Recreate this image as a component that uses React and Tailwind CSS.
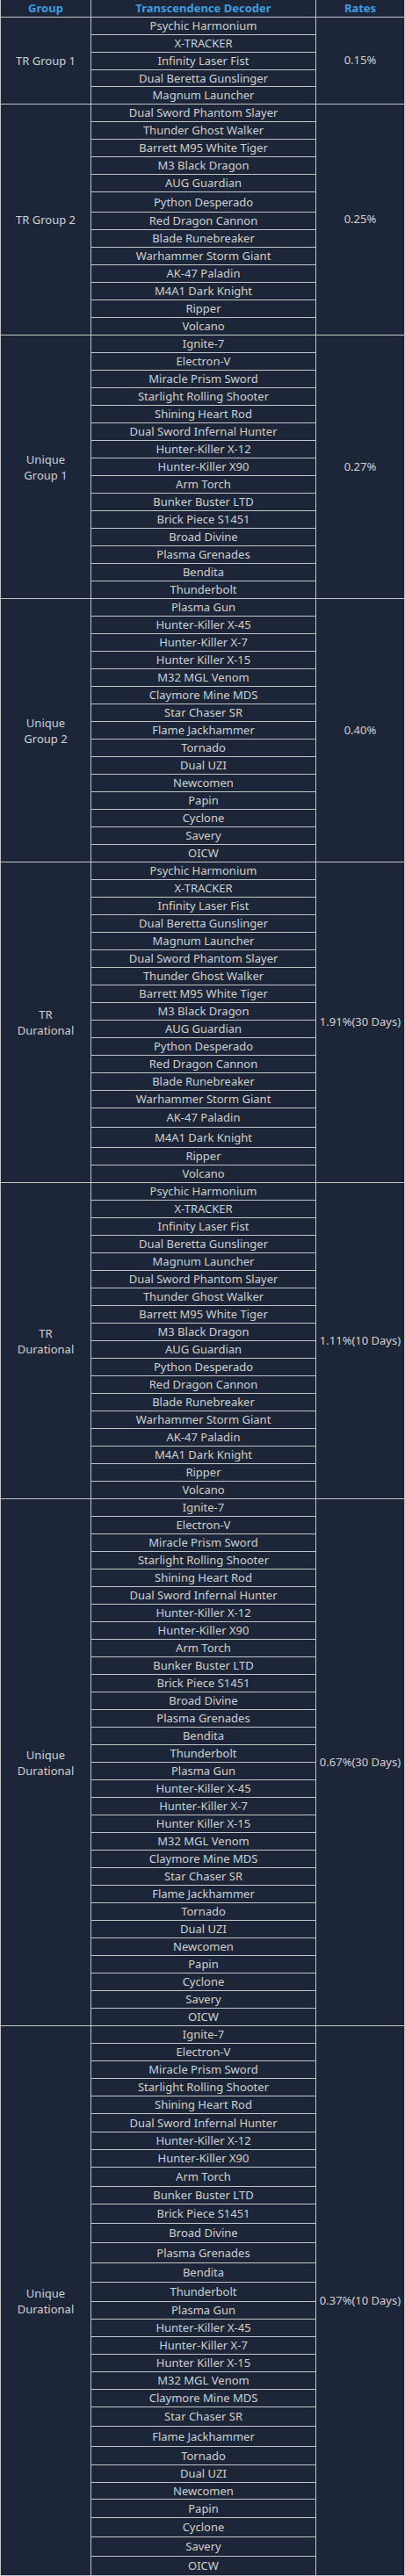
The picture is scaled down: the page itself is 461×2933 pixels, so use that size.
import React from "react";

const H = {
  19: "h-[19px]",
  20: "h-[20px]",
  21: "h-[21px]",
  22: "h-[22px]",
  23: "h-[23px]",
};

const TR1 = ["Psychic Harmonium", "X-TRACKER", "Infinity Laser Fist", "Dual Beretta Gunslinger", "Magnum Launcher"];
const TR2 = [
  "Dual Sword Phantom Slayer", "Thunder Ghost Walker", "Barrett M95 White Tiger", "M3 Black Dragon",
  "AUG Guardian", "Python Desperado", "Red Dragon Cannon", "Blade Runebreaker", "Warhammer Storm Giant",
  "AK-47 Paladin", "M4A1 Dark Knight", "Ripper", "Volcano",
];
const U1 = [
  "Ignite-7", "Electron-V", "Miracle Prism Sword", "Starlight Rolling Shooter", "Shining Heart Rod",
  "Dual Sword Infernal Hunter", "Hunter-Killer X-12", "Hunter-Killer X90", "Arm Torch", "Bunker Buster LTD",
  "Brick Piece S1451", "Broad Divine", "Plasma Grenades", "Bendita", "Thunderbolt",
];
const U2 = [
  "Plasma Gun", "Hunter-Killer X-45", "Hunter-Killer X-7", "Hunter Killer X-15", "M32 MGL Venom",
  "Claymore Mine MDS", "Star Chaser SR", "Flame Jackhammer", "Tornado", "Dual UZI", "Newcomen", "Papin",
  "Cyclone", "Savery", "OICW",
];

const fill = (n, v = 20) => Array.from({ length: n }, () => v);

const groups = [
  { label: ["TR Group 1"], rate: "0.15%", items: TR1, heights: [20, 20, 20, 19, 20] },
  { label: ["TR Group 2"], rate: "0.25%", items: TR2, heights: [20, 20, 20, 20, 20, 23, 20, 20, 20, 20, 20, 20, 20] },
  { label: ["Unique", "Group 1"], rate: "0.27%", items: U1, heights: fill(15) },
  { label: ["Unique", "Group 2"], rate: "0.40%", items: U2, heights: fill(15) },
  {
    label: ["TR", "Durational"], rate: "1.91%(30 Days)", items: [...TR1, ...TR2],
    heights: [...fill(14), 22, 23, 20, 20],
  },
  { label: ["TR", "Durational"], rate: "1.11%(10 Days)", items: [...TR1, ...TR2], heights: fill(18) },
  { label: ["Unique", "Durational"], rate: "0.67%(30 Days)", items: [...U1, ...U2], heights: fill(30) },
  {
    label: ["Unique", "Durational"], rate: "0.37%(10 Days)", items: [...U1, ...U2],
    heights: [
      20, 20, 20, 20, 20, 21, 20, 20, 22, 20, 22, 22, 23, 22, 22,
      20, 20, 20, 20, 20, 20, 22, 23, 21, 20, 19, 21, 22, 22, 22,
    ],
  },
];

export default function App() {
  return (
    <div
      className="w-[461px] bg-[#1c2638] text-[13px] text-[#cfd0d0] border-l border-b border-[#c4c4c4]"
      style={{ fontFamily: '"Noto Sans", "Open Sans", "Noto Sans CJK KR", sans-serif' }}
    >
      <div className="flex h-[20px] font-bold text-[#3f9de0]">
        <div className="w-[103px] shrink-0 flex items-center justify-center border-r border-b border-[#c4c4c4] leading-none">
          Group
        </div>
        <div className="w-[256px] shrink-0 flex items-center justify-center border-r border-b border-[#c4c4c4] leading-none">
          Transcendence Decoder
        </div>
        <div className="w-[101px] shrink-0 flex items-center justify-center border-r border-b border-[#c4c4c4] leading-none">
          Rates
        </div>
      </div>
      {groups.map((g, gi) => (
        <div key={gi} className="flex">
          <div className="w-[103px] shrink-0 flex flex-col items-center justify-center border-r border-b border-[#c4c4c4] leading-[18px] text-center">
            {g.label.map((l, i) => (
              <span key={i}>{l}</span>
            ))}
          </div>
          <div className="w-[256px] shrink-0 flex flex-col border-r border-[#c4c4c4]">
            {g.items.map((it, i) => (
              <div
                key={i}
                className={`${H[g.heights[i]]} flex items-center justify-center border-b border-[#c4c4c4] leading-none whitespace-nowrap`}
              >
                {it}
              </div>
            ))}
          </div>
          <div className="w-[101px] shrink-0 flex items-center justify-center border-r border-b border-[#c4c4c4] whitespace-nowrap">
            {g.rate}
          </div>
        </div>
      ))}
    </div>
  );
}
